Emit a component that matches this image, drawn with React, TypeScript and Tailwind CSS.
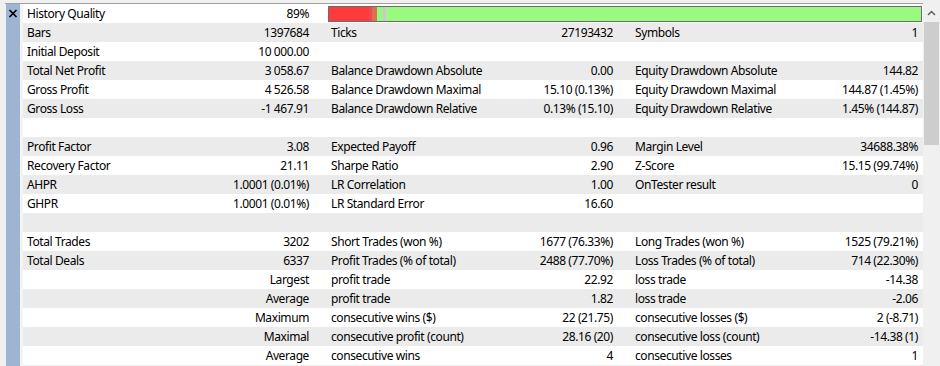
import React from "react";

type Cell = [string, string];
type Row = { c1: Cell; c2?: Cell; c3?: Cell; bar?: boolean };

const rows: Row[] = [
  { c1: ["History Quality", "89%"], bar: true },
  { c1: ["Bars", "1397684"], c2: ["Ticks", "27193432"], c3: ["Symbols", "1"] },
  { c1: ["Initial Deposit", "10 000.00"] },
  { c1: ["Total Net Profit", "3 058.67"], c2: ["Balance Drawdown Absolute", "0.00"], c3: ["Equity Drawdown Absolute", "144.82"] },
  { c1: ["Gross Profit", "4 526.58"], c2: ["Balance Drawdown Maximal", "15.10 (0.13%)"], c3: ["Equity Drawdown Maximal", "144.87 (1.45%)"] },
  { c1: ["Gross Loss", "-1 467.91"], c2: ["Balance Drawdown Relative", "0.13% (15.10)"], c3: ["Equity Drawdown Relative", "1.45% (144.87)"] },
  { c1: ["", ""] },
  { c1: ["Profit Factor", "3.08"], c2: ["Expected Payoff", "0.96"], c3: ["Margin Level", "34688.38%"] },
  { c1: ["Recovery Factor", "21.11"], c2: ["Sharpe Ratio", "2.90"], c3: ["Z-Score", "15.15 (99.74%)"] },
  { c1: ["AHPR", "1.0001 (0.01%)"], c2: ["LR Correlation", "1.00"], c3: ["OnTester result", "0"] },
  { c1: ["GHPR", "1.0001 (0.01%)"], c2: ["LR Standard Error", "16.60"] },
  { c1: ["", ""] },
  { c1: ["Total Trades", "3202"], c2: ["Short Trades (won %)", "1677 (76.33%)"], c3: ["Long Trades (won %)", "1525 (79.21%)"] },
  { c1: ["Total Deals", "6337"], c2: ["Profit Trades (% of total)", "2488 (77.70%)"], c3: ["Loss Trades (% of total)", "714 (22.30%)"] },
  { c1: ["", "Largest"], c2: ["profit trade", "22.92"], c3: ["loss trade", "-14.38"] },
  { c1: ["", "Average"], c2: ["profit trade", "1.82"], c3: ["loss trade", "-2.06"] },
  { c1: ["", "Maximum"], c2: ["consecutive wins ($)", "22 (21.75)"], c3: ["consecutive losses ($)", "2 (-8.71)"] },
  { c1: ["", "Maximal"], c2: ["consecutive profit (count)", "28.16 (20)"], c3: ["consecutive loss (count)", "-14.38 (1)"] },
  { c1: ["", "Average"], c2: ["consecutive wins", "4"], c3: ["consecutive losses", "1"] },
  { c1: ["", ""] },
];

function QualityBar() {
  return (
    <div className="ml-[1px] mr-[1px] mt-[2px] h-[16px] flex-1 border border-[#6b6b6b] flex">
      <div className="w-[40px] bg-[#ff3a3a]" />
      <div className="w-[3px] bg-[#f24848]" />
      <div className="w-[5px] bg-[#dc7050]" />
      <div className="w-[6px] bg-[#98f880]" />
      <div className="w-[3px] bg-[#c9c9c9]" />
      <div className="w-[2px] bg-[#a8f090]" />
      <div className="flex-1 bg-[#98fb7f]" />
    </div>
  );
}

export default function App() {
  return (
    <div
      className="w-[940px] h-[366px] overflow-hidden bg-[#f0f0f0] flex flex-col text-[12px] tracking-[-0.4px] text-black"
      style={{ fontFamily: '"Noto Sans", "Liberation Sans", sans-serif' }}
    >
      <div className="h-[3px] shrink-0 flex">
        <div className="w-[923px]" />
      </div>
      <div className="h-[1px] shrink-0 flex">
        <div className="w-[5px]" />
        <div className="w-[918px] bg-[#a0a0a0]" />
      </div>
      <div className="flex flex-1 min-h-0">
        <div className="w-[6px] shrink-0" />
        <div className="w-[14px] shrink-0 bg-[#9db5d3] flex flex-col items-center">
          <svg width="14" height="19" viewBox="0 0 14 19" className="shrink-0">
            <path d="M3.5 6 L10.5 13 M10.5 6 L3.5 13" stroke="#000" strokeWidth="1.7" />
          </svg>
        </div>
        <div className="w-[3px] shrink-0 bg-[#f4f4f4]" />
        <div className="w-[900px] shrink-0 flex flex-col">
          {rows.map((r, i) => (
            <div
              key={i}
              className={`h-[19px] shrink-0 flex leading-[19px] whitespace-nowrap ${i % 2 === 0 ? "bg-white" : "bg-[#ebebeb]"}`}
            >
              <div className="w-[304px] flex justify-between pl-[4px] pr-[18px]">
                <span>{r.c1[0]}</span>
                <span>{r.c1[1]}</span>
              </div>
              {r.bar ? (
                <QualityBar />
              ) : (
                <>
                  <div className="w-[304px] flex justify-between pl-[4px] pr-[18px]">
                    <span>{r.c2 ? r.c2[0] : ""}</span>
                    <span>{r.c2 ? r.c2[1] : ""}</span>
                  </div>
                  <div className="w-[292px] flex justify-between pl-[4px] pr-[5px]">
                    <span>{r.c3 ? r.c3[0] : ""}</span>
                    <span>{r.c3 ? r.c3[1] : ""}</span>
                  </div>
                </>
              )}
            </div>
          ))}
        </div>
        <div className="w-[17px] shrink-0 bg-[#f0f0f0] flex flex-col">
          <div className="h-[18px] shrink-0 flex items-center justify-center">
            <svg width="9" height="6" viewBox="0 0 9 6">
              <path d="M1 5 L4.5 1.5 L8 5" fill="none" stroke="#606060" strokeWidth="1.5" />
            </svg>
          </div>
          <div className="mx-[1px] h-[123px] bg-[#cdcdcd]" />
        </div>
      </div>
    </div>
  );
}
